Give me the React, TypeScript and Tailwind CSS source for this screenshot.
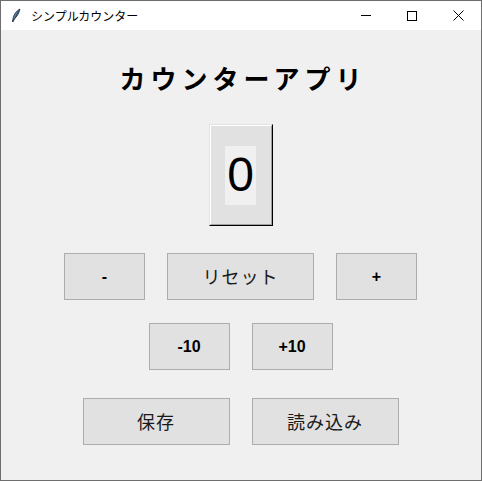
import React, { useState } from "react";

const jp = { fontFamily: '"Noto Sans CJK JP", "Liberation Sans", sans-serif' };
const ar = { fontFamily: '"Liberation Sans", Arial, sans-serif' };

const Btn = ({ label, w, jpText }: { label: string; w: string; jpText?: boolean }) => (
  <button
    type="button"
    className={`${w} h-[47px] bg-[#e1e1e1] border border-[#adadad] flex items-center justify-center text-black`}
    style={jpText ? jp : ar}
  >
    <span className={jpText ? "text-[18px] tracking-[1px] text-[#1a1a1a]" : "text-[16px] font-bold"}>{label}</span>
  </button>
);

const App = () => {
  const [count] = useState(0);

  return (
    <div className="w-[482px] h-[481px] border border-[#6e6e6e] flex flex-col bg-[#f0f0f0] overflow-hidden">
      {/* title bar */}
      <div className="h-[29px] bg-white flex items-center shrink-0">
        <svg width="10" height="16" viewBox="0 0 10 16" className="ml-[10px]">
          <path d="M9 1 C5 3 2 7 1.5 14 L3 11 C6 9 8 5 9 1 Z" fill="#5b7fa8" stroke="#1f2d3d" strokeWidth="0.8" />
          <path d="M8 2.5 L2 14" stroke="#1f2d3d" strokeWidth="0.7" />
        </svg>
        <span className="ml-[10px] text-[12px] text-black" style={jp}>シンプルカウンター</span>
        <div className="ml-auto flex items-center">
          <div className="w-[46px] h-[29px] flex items-center justify-center">
            <div className="w-[10px] h-px bg-black" />
          </div>
          <div className="w-[46px] h-[29px] flex items-center justify-center">
            <div className="w-[10px] h-[10px] border border-black" />
          </div>
          <div className="w-[46px] h-[29px] flex items-center justify-center">
            <svg width="11" height="11" viewBox="0 0 11 11">
              <path d="M0.5 0.5 L10.5 10.5 M10.5 0.5 L0.5 10.5" stroke="#000" strokeWidth="1" />
            </svg>
          </div>
        </div>
      </div>

      {/* content */}
      <div className="flex-1 flex flex-col items-center pr-[1px]">
        <div className="mt-[31px] h-[34px] text-[26px] leading-[34px] font-bold tracking-[5px] text-black pl-[5px]" style={jp}>
          カウンターアプリ
        </div>

        <div className="mt-[29px] w-[64px] h-[102px] border border-t-[#e3e3e3] border-l-[#e3e3e3] border-r-black border-b-black">
          <div className="w-full h-full border border-t-white border-l-white border-r-[#a0a0a0] border-b-[#a0a0a0] bg-[#e1e1e1] flex items-center justify-center">
            <div className="w-[31px] h-[59px] bg-[#f0f0f0] flex items-center justify-center text-[48px] leading-none text-black" style={ar}>
              {count}
            </div>
          </div>
        </div>

        <div className="mt-[27px] flex gap-[22px]">
          <Btn label="-" w="w-[81px]" />
          <Btn label="リセット" w="w-[147px]" jpText />
          <Btn label="+" w="w-[81px]" />
        </div>

        <div className="mt-[23px] flex gap-[22px]">
          <Btn label="-10" w="w-[81px]" />
          <Btn label="+10" w="w-[81px]" />
        </div>

        <div className="mt-[28px] flex gap-[22px]">
          <Btn label="保存" w="w-[147px]" jpText />
          <Btn label="読み込み" w="w-[147px]" jpText />
        </div>
      </div>
    </div>
  );
};

export default App;
